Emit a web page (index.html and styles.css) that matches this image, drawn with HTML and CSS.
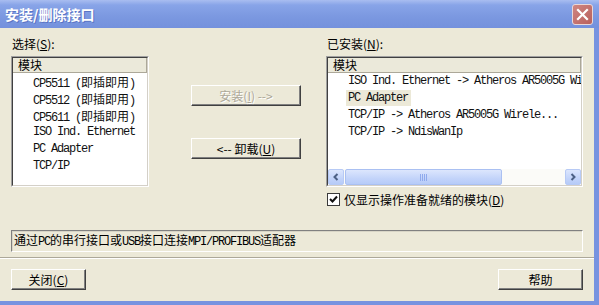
FILE: index.html
```html
<!DOCTYPE html>
<html lang="zh-CN">
<head>
  <meta charset="UTF-8" />
  <title>安装/删除接口</title>
  <link rel="stylesheet" href="styles.css">
</head>
<body>
  <div class="window">
    <div class="titlebar">
      <span class="title">安装/删除接口</span>
      <button class="close">
        <svg width="13" height="13" viewBox="0 0 13 13"><path d="M2 2 L11 11 M11 2 L2 11" stroke="#fff" stroke-width="2.2" stroke-linecap="square"/></svg>
      </button>
    </div>

    <div class="content">
      <div class="panes">
        <div class="pane pane-left">
          <div class="label">选择(<u>S</u>):</div>
          <div class="list">
            <div class="list-box">
              <div class="list-head"><span class="head-cell">模块</span></div>
              <ul class="rows">
                <li>CP5511 (<span class="cjk">即插即用</span>)</li>
                <li>CP5512 (<span class="cjk">即插即用</span>)</li>
                <li>CP5611 (<span class="cjk">即插即用</span>)</li>
                <li>ISO Ind. Ethernet</li>
                <li>PC Adapter</li>
                <li>TCP/IP</li>
              </ul>
            </div>
          </div>
        </div>

        <div class="actions">
          <button class="btn btn-move" disabled>安装(<u>I</u>) --&gt;</button>
          <button class="btn btn-move btn-remove">&lt;-- 卸载(<u>U</u>)</button>
        </div>

        <div class="pane pane-right">
          <div class="label">已安装(<u>N</u>):</div>
          <div class="list">
            <div class="list-box">
              <div class="list-head"><span class="head-cell wide">模块</span></div>
              <ul class="rows">
                <li>ISO Ind. Ethernet -&gt; Atheros AR5005G Wi</li>
                <li><span class="selected">PC Adapter</span></li>
                <li>TCP/IP -&gt; Atheros AR5005G Wirele...</li>
                <li>TCP/IP -&gt; NdisWanIp</li>
              </ul>
              <div class="hscroll">
                <span class="arrow">
                  <svg width="8" height="8" viewBox="0 0 8 8"><path d="M5.5 1 L2.5 4 L5.5 7" fill="none" stroke="#4d6185" stroke-width="2"/></svg>
                </span>
                <div class="track">
                  <span class="thumb">
                    <svg width="8" height="7" viewBox="0 0 8 7"><path d="M0.5 0 V7 M2.5 0 V7 M4.5 0 V7 M6.5 0 V7" stroke="#8faaed" stroke-width="1"/></svg>
                  </span>
                </div>
                <span class="arrow">
                  <svg width="8" height="8" viewBox="0 0 8 8"><path d="M2.5 1 L5.5 4 L2.5 7" fill="none" stroke="#4d6185" stroke-width="2"/></svg>
                </span>
              </div>
            </div>
          </div>
          <label class="check">
            <span class="box">
              <svg width="9" height="9" viewBox="0 0 9 9"><path d="M1 4 L3.5 6.5 L8 1.5" fill="none" stroke="#111" stroke-width="2"/></svg>
            </span>
            <span>仅显示操作准备就绪的模块(<u>D</u>)</span>
          </label>
        </div>
      </div>

      <div class="desc">通过<span class="en">PC</span>的串行接口或<span class="en">USB</span>接口连接<span class="en">MPI/PROFIBUS</span>适配器</div>

      <div class="separator"></div>

      <div class="footer">
        <button class="btn btn-close">关闭(<u>C</u>)</button>
        <button class="btn btn-help">帮助</button>
      </div>
    </div>
  </div>
</body>
</html>
```

FILE: styles.css
```css
:root {
  --face: #ece9d8;
  --frame: #7793e0;
  --shadow: #808080;
  --dark: #404040;
}

body {
  margin: 0;
  width: 599px;
  height: 305px;
  overflow: hidden;
  background: var(--face);
  font-family: "Noto Sans CJK SC", sans-serif;
  font-size: 12px;
  color: #000;
}

.window {
  height: 305px;
  display: flex;
  flex-direction: column;
  box-sizing: border-box;
  border-right: 5px solid var(--frame);
  border-bottom: 4px solid var(--frame);
}

/* title bar */
.titlebar {
  height: 28px;
  flex-shrink: 0;
  display: flex;
  align-items: center;
  justify-content: space-between;
  padding: 0 6px 0 5px;
  margin-right: -5px;
  background: linear-gradient(#a9bdf0, #88a4e8 18%, #7b98e0 60%, #7491dd);
}

.title {
  color: #fff;
  font-size: 14px;
  font-weight: bold;
  line-height: 16px;
  text-shadow: 1px 1px #5a74c4;
}

.close {
  width: 21px;
  height: 21px;
  padding: 0;
  border: 1px solid #e9d7d7;
  border-radius: 3px;
  background: linear-gradient(135deg, #cf8682, #b9605c);
  display: flex;
  align-items: center;
  justify-content: center;
}

/* main area */
.content {
  flex: 1;
  display: flex;
  flex-direction: column;
  padding: 9px 11px 0 11px;
}

.panes {
  display: flex;
  align-items: flex-start;
}

.pane {
  display: flex;
  flex-direction: column;
}

.pane-left {
  width: 138px;
}

.pane-right {
  width: 257px;
  margin-left: 25px;
}

.label {
  height: 14px;
  line-height: 14px;
  margin: 0 0 5px 1px;
}

.list {
  height: 131px;
  box-sizing: border-box;
  border: 1px solid;
  border-color: #a0a0a0 #fff #fff #a0a0a0;
}

.list-box {
  height: 100%;
  box-sizing: border-box;
  border: 1px solid;
  border-color: var(--dark) #d4d0c8 #d4d0c8 var(--dark);
  background: #fff;
  display: flex;
  flex-direction: column;
  overflow: hidden;
}

.list-head {
  display: flex;
  height: 15px;
  flex-shrink: 0;
  background: #fff;
}

.head-cell {
  flex: 1;
  box-sizing: border-box;
  padding-left: 5px;
  line-height: 14px;
  background: #ebe9da;
  border-bottom: 1px solid #aca899;
  border-right: 1px solid #aca899;
}

.rows {
  flex: 1;
  list-style: none;
  margin: 0;
  padding: 0;
}

.rows li {
  height: 17px;
  line-height: 17px;
  padding-left: 20px;
  white-space: nowrap;
  font-family: "Liberation Mono", "Noto Sans CJK SC", monospace;
  font-size: 12px;
  letter-spacing: -1.2px;
  color: #111;
}

.cjk {
  font-family: "Noto Sans CJK SC", sans-serif;
  font-size: 12px;
  letter-spacing: 0;
}

.selected {
  display: inline-block;
  line-height: 16px;
  margin-left: -2px;
  padding: 0 3px 0 2px;
  background: var(--face);
}

/* horizontal scrollbar */
.hscroll {
  display: flex;
  height: 16px;
  flex-shrink: 0;
  background: #fbfbf8;
}

.arrow, .thumb {
  box-sizing: border-box;
  border: 1px solid #b7caf5;
  border-radius: 2px;
  background: linear-gradient(#dce6fd, #c3d4fa 60%, #b6cbf8);
  display: flex;
  align-items: center;
  justify-content: center;
}

.arrow {
  width: 16px;
}

.track {
  flex: 1;
  display: flex;
  padding-left: 1px;
}

.thumb {
  width: 157px;
  border-color: #aac0f2;
}

/* checkbox */
.check {
  display: flex;
  align-items: center;
  gap: 4px;
  margin: 6px 0 0 1px;
  height: 13px;
  line-height: 13px;
}

.check .box {
  width: 13px;
  height: 13px;
  box-sizing: border-box;
  border: 1px solid #3a3a3a;
  background: #fff;
  display: flex;
  align-items: center;
  justify-content: center;
}

/* middle buttons */
.actions {
  width: 110px;
  margin-left: 42px;
  display: flex;
  flex-direction: column;
}

.btn {
  height: 21px;
  padding: 0;
  box-sizing: border-box;
  background: var(--face);
  border: 1px solid;
  border-color: #fff var(--dark) var(--dark) #fff;
  box-shadow: inset -1px -1px var(--shadow);
  font-family: "Noto Sans CJK SC", sans-serif;
  font-size: 12px;
  line-height: 18px;
  color: #000;
}

.btn-move {
  margin-top: 48px;
}

.btn-remove {
  margin-top: 32px;
}

.btn:disabled {
  color: #aca899;
  text-shadow: 1px 1px #fff;
}

/* description */
.desc {
  height: 22px;
  margin-top: 24px;
  box-sizing: border-box;
  padding: 1px 2px;
  line-height: 15px;
  border: 1px solid;
  border-color: var(--shadow) #fff #fff var(--shadow);
  box-shadow: inset 1px 1px #d8d5c6;
}

.en {
  font-family: "Liberation Mono", monospace;
  font-size: 12px;
  letter-spacing: -1.2px;
}

.separator {
  margin: 5px -11px 0 -11px;
  border-top: 1px solid #aca899;
  border-bottom: 1px solid #fff;
  height: 0;
}

.footer {
  display: flex;
  justify-content: space-between;
  margin-top: 10px;
}

.btn-close {
  width: 75px;
}

.btn-help {
  width: 85px;
}
```
